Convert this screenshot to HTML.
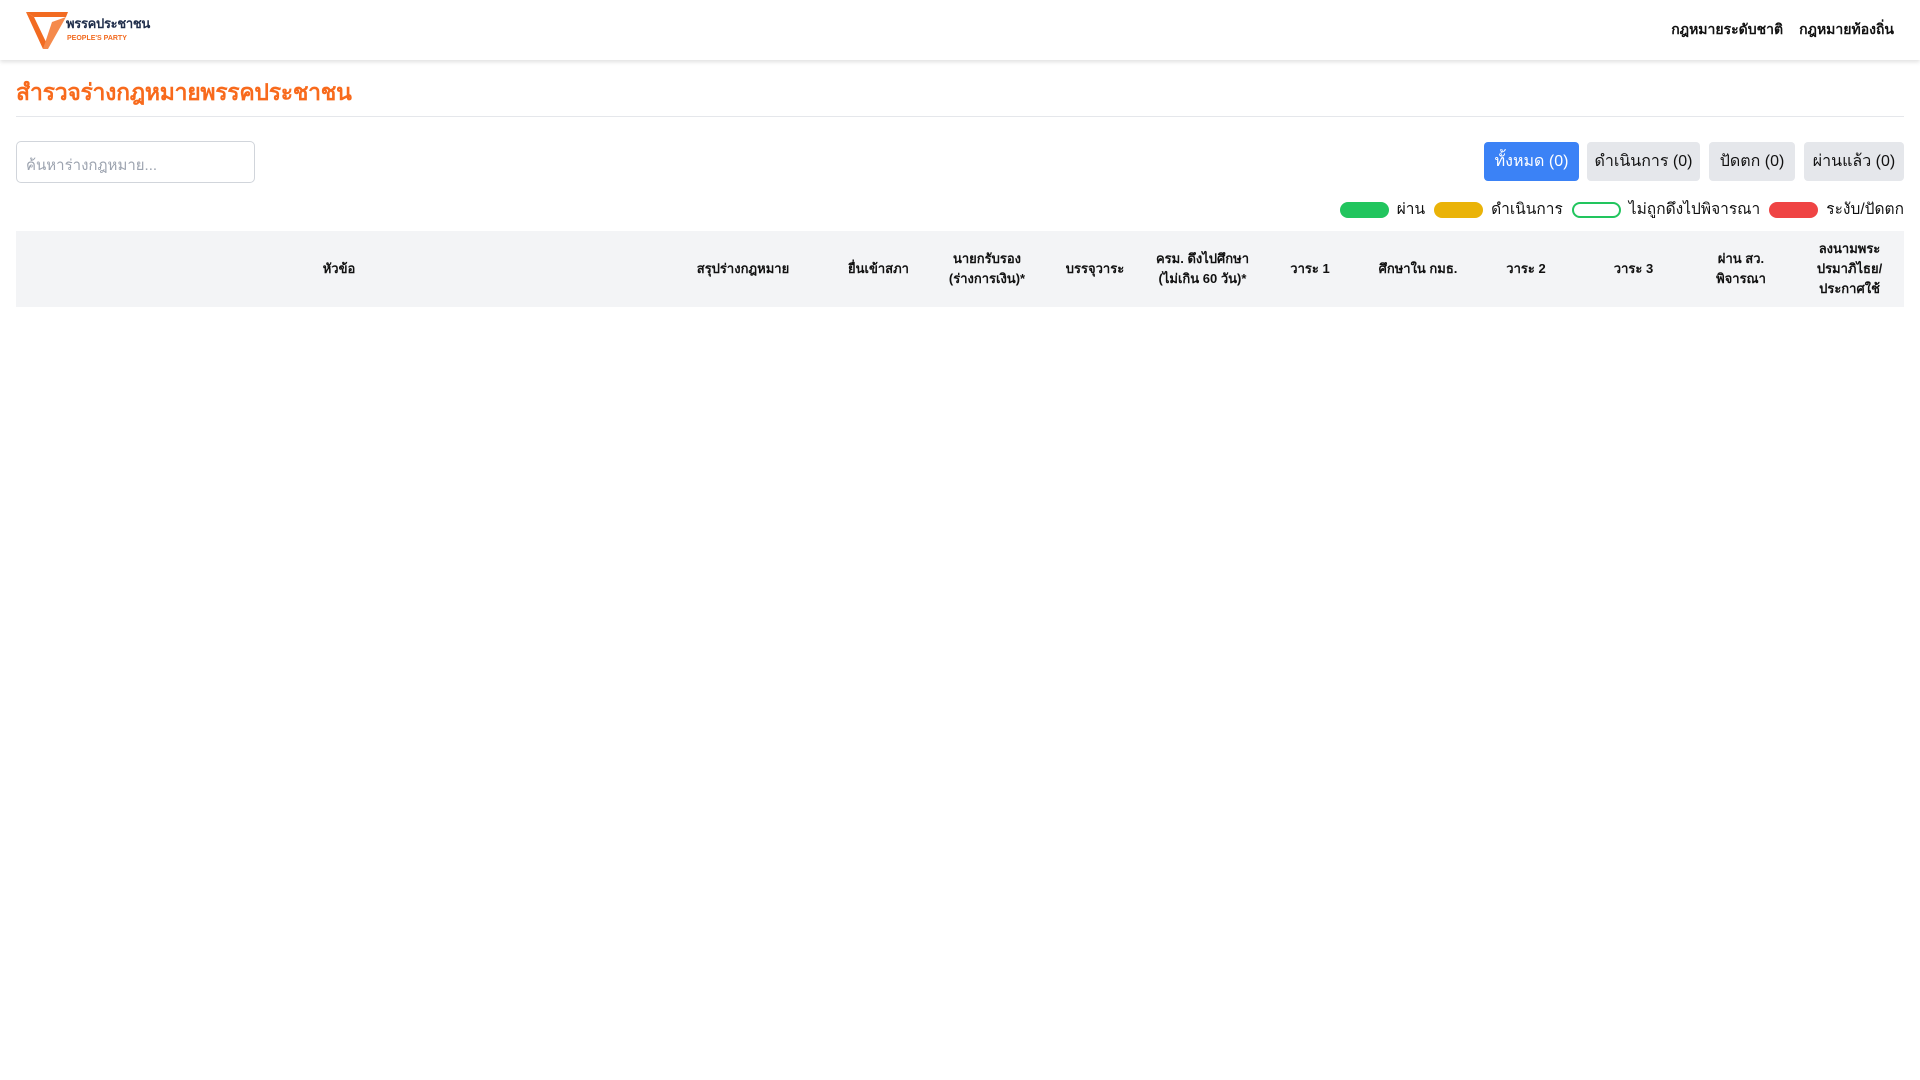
<!DOCTYPE html>
<html><head><meta charset="utf-8"><style>
*{box-sizing:border-box;margin:0;padding:0}
body{width:1920px;height:1080px;background:#fff;font-family:"Liberation Sans","DejaVu Sans",sans-serif;color:#111;position:relative;overflow:hidden}
.hdr{position:absolute;left:0;top:0;width:1920px;height:60px;background:#fff;box-shadow:0 2px 4px rgba(0,0,0,.12)}
.navw{position:absolute;right:26px;top:19px;display:flex;gap:16px;font-size:14px;font-weight:bold;color:#111}
h1{position:absolute;left:16px;top:75px;font-size:23px;color:#f86a1c;font-weight:bold;letter-spacing:-0.3px}
.hr{position:absolute;left:16px;top:116px;width:1888px;height:1px;background:#e5e7eb}
.search{position:absolute;left:16px;top:141px;width:239px;height:42px;border:1px solid #d1d5db;border-radius:5px;color:#9ca3af;font-size:15px;padding:11px 9px}
.btn{position:absolute;top:142px;height:39px;border-radius:4px;background:#e5e7eb;font-size:16px;text-align:center;line-height:39px;color:#111;white-space:nowrap}
.legw{position:absolute;right:16px;top:200px;display:flex;align-items:center;font-size:15.5px;line-height:20px;white-space:nowrap}
.pill{width:49px;height:16px;border-radius:8px;margin:0 8px 0 9px}
.th{position:absolute;left:16px;top:231px;width:1888px;height:76px;background:#f3f4f6}
.c{position:absolute;top:0;height:76px;display:flex;align-items:center;justify-content:center;text-align:center;font-size:13px;font-weight:bold;line-height:20px}
</style></head><body>
<div class="hdr">
<svg style="position:absolute;left:26px;top:12px" width="42" height="37" viewBox="0 0 42 37"><polygon points="0,0 42,0 40,5 8,5" fill="#f26b21"/><polygon points="0,0 8,5 20,30 17,37" fill="#f26b21"/><polygon points="26,10 40,5 22,37 17,37" fill="#f58a4c"/></svg>
<div style="position:absolute;left:66px;top:16px;font-size:13px;font-weight:bold;color:#1f2d4a;letter-spacing:-0.3px;line-height:16px">พรรคประชาชน</div>
<div style="position:absolute;left:67px;top:35px;font-size:7px;font-weight:bold;color:#f26b21;line-height:8px">PEOPLE'S PARTY</div>
<div class="navw"><span>กฎหมายระดับชาติ</span><span>กฎหมายท้องถิ่น</span></div>
</div>
<h1>สำรวจร่างกฎหมายพรรคประชาชน</h1>
<div class="hr"></div>
<div class="search">ค้นหาร่างกฎหมาย...</div>
<div class="btn" style="left:1484px;width:95px;background:#3b82f6;color:#fff">ทั้งหมด (0)</div>
<div class="btn" style="left:1587px;width:113px">ดำเนินการ (0)</div>
<div class="btn" style="left:1709px;width:86px">ปัดตก (0)</div>
<div class="btn" style="left:1804px;width:100px">ผ่านแล้ว (0)</div>
<div class="legw">
<div class="pill" style="background:#22c55e"></div><span>ผ่าน</span>
<div class="pill" style="background:#eab308"></div><span>ดำเนินการ</span>
<div class="pill" style="border:2px solid #22c55e"></div><span>ไม่ถูกดึงไปพิจารณา</span>
<div class="pill" style="background:#ef4444"></div><span>ระงับ/ปัดตก</span>
</div>
<div class="th">
<div class="c" style="left:0;width:646px">หัวข้อ</div>
<div class="c" style="left:646px;width:162px">สรุปร่างกฎหมาย</div>
<div class="c" style="left:808px;width:109px">ยื่นเข้าสภา</div>
<div class="c" style="left:917px;width:108px">นายกรับรอง<br>(ร่างการเงิน)*</div>
<div class="c" style="left:1025px;width:108px">บรรจุวาระ</div>
<div class="c" style="left:1133px;width:107px">ครม. ดึงไปศึกษา<br>(ไม่เกิน 60 วัน)*</div>
<div class="c" style="left:1240px;width:108px">วาระ 1</div>
<div class="c" style="left:1348px;width:108px">ศึกษาใน กมธ.</div>
<div class="c" style="left:1456px;width:108px">วาระ 2</div>
<div class="c" style="left:1564px;width:107px">วาระ 3</div>
<div class="c" style="left:1671px;width:108px">ผ่าน สว.<br>พิจารณา</div>
<div class="c" style="left:1779px;width:109px">ลงนามพระ<br>ปรมาภิไธย/<br>ประกาศใช้</div>
</div>
</body></html>
